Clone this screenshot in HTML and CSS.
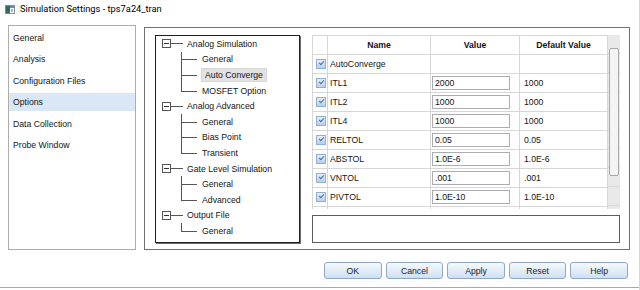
FILE: index.html
```html
<!DOCTYPE html>
<html lang="en">
<head>
    <meta charset="UTF-8">
    <title>Simulation Settings</title>
    <link rel="stylesheet" href="styles.css">
</head>
<body>
<div class="window">
    <div class="titlebar">
        <svg class="app-icon" width="10" height="9" viewBox="0 0 10 9">
            <rect x="0.5" y="0.5" width="9" height="8" fill="#fff" stroke="#8a8a8a"/>
            <rect x="1" y="1" width="4" height="7" fill="#2f6b5e"/>
            <rect x="5" y="1" width="4" height="2" fill="#5a8fc7"/>
            <rect x="6" y="4" width="2" height="3" fill="#9ab8d6"/>
        </svg>
        <span class="title">Simulation Settings - tps7a24_tran</span>
    </div>

    <div class="main">
        <ul class="nav">
            <li>General</li>
            <li>Analysis</li>
            <li>Configuration Files</li>
            <li class="active">Options</li>
            <li>Data Collection</li>
            <li>Probe Window</li>
        </ul>

        <div class="group">
            <div class="tree">
                <div class="node">
                    <div class="node-head"><span class="expander"></span><span class="connector"></span><span class="label">Analog Simulation</span></div>
                    <ul class="children">
                        <li><span class="label">General</span></li>
                        <li><span class="label selected">Auto Converge</span></li>
                        <li><span class="label">MOSFET Option</span></li>
                    </ul>
                </div>
                <div class="node">
                    <div class="node-head"><span class="expander"></span><span class="connector"></span><span class="label">Analog Advanced</span></div>
                    <ul class="children">
                        <li><span class="label">General</span></li>
                        <li><span class="label">Bias Point</span></li>
                        <li><span class="label">Transient</span></li>
                    </ul>
                </div>
                <div class="node">
                    <div class="node-head"><span class="expander"></span><span class="connector"></span><span class="label">Gate Level Simulation</span></div>
                    <ul class="children">
                        <li><span class="label">General</span></li>
                        <li><span class="label">Advanced</span></li>
                    </ul>
                </div>
                <div class="node">
                    <div class="node-head"><span class="expander"></span><span class="connector"></span><span class="label">Output File</span></div>
                    <ul class="children">
                        <li><span class="label">General</span></li>
                    </ul>
                </div>
            </div>

            <div class="options-pane">
                <div class="table-wrap">
                    <table class="grid">
                        <colgroup>
                            <col class="c-check"><col class="c-name"><col class="c-value"><col class="c-default">
                        </colgroup>
                        <tr><th></th><th>Name</th><th>Value</th><th>Default Value</th></tr>
                        <tr><td><span class="check"></span></td><td>AutoConverge</td><td></td><td></td></tr>
                        <tr><td><span class="check"></span></td><td>ITL1</td><td><span class="field">2000</span></td><td>1000</td></tr>
                        <tr><td><span class="check"></span></td><td>ITL2</td><td><span class="field">1000</span></td><td>1000</td></tr>
                        <tr><td><span class="check"></span></td><td>ITL4</td><td><span class="field">1000</span></td><td>1000</td></tr>
                        <tr><td><span class="check"></span></td><td>RELTOL</td><td><span class="field">0.05</span></td><td>0.05</td></tr>
                        <tr><td><span class="check"></span></td><td>ABSTOL</td><td><span class="field">1.0E-6</span></td><td>1.0E-6</td></tr>
                        <tr><td><span class="check"></span></td><td>VNTOL</td><td><span class="field">.001</span></td><td>.001</td></tr>
                        <tr><td><span class="check"></span></td><td>PIVTOL</td><td><span class="field">1.0E-10</span></td><td>1.0E-10</td></tr>
                        <tr><td></td><td></td><td><span class="field"></span></td><td></td></tr>
                    </table>
                    <div class="scrollbar"><div class="thumb"></div></div>
                </div>
                <div class="desc"></div>
            </div>
        </div>
    </div>

    <div class="buttons">
        <button>OK</button>
        <button>Cancel</button>
        <button>Apply</button>
        <button>Reset</button>
        <button>Help</button>
    </div>
    <div class="edge"></div>
</div>
</body>
</html>
```

FILE: styles.css
```css
*{
    box-sizing: border-box;
    margin: 0;
    padding: 0;
}
body{
    width: 640px;
    height: 290px;
    background: #fff;
    font-family: "Liberation Sans", Arial, sans-serif;
    font-size: 8.7px;
    color: #141414;
    overflow: hidden;
}
.window{
    height: 290px;
    border-right: 1px solid #d6d6d6;
}
.titlebar{
    height: 25px;
    display: flex;
    align-items: flex-start;
    gap: 5px;
    padding: 4px 0 0 5px;
}
.app-icon{
    margin-top: 1px;
}
.title{
    font-family: Roboto, sans-serif;
    font-size: 9.3px;
    line-height: 10px;
    color: #000;
}

.main{
    display: flex;
    align-items: flex-start;
    gap: 8px;
    padding-left: 8px;
}
.nav{
    list-style: none;
    width: 128px;
    height: 225px;
    border: 1px solid #adadad;
    padding-top: 3px;
}
.nav li{
    height: 18px;
    line-height: 18px;
    padding-left: 4px;
    margin-bottom: 3.4px;
}
.nav li.active{
    background: #d9e7f6;
}

.group{
    display: flex;
    gap: 12px;
    width: 486px;
    height: 223px;
    margin-top: 2px;
    border: 1px solid #707070;
    padding: 7px 9px 0 10px;
}

/* tree */
.tree{
    width: 145px;
    height: 208px;
    border: 1px solid #1e1e1e;
    box-shadow: 1px 1px 0 #6e6e6e;
}
.node-head{
    display: flex;
    align-items: center;
    height: 15.6px;
    padding-left: 6px;
}
.expander{
    position: relative;
    width: 9px;
    height: 9px;
    border: 1px solid #555;
}
.expander::after{
    content: '';
    position: absolute;
    left: 1px;
    right: 1px;
    top: 3px;
    height: 1px;
    background: #333;
}
.connector{
    width: 12px;
    height: 1px;
    background: #555;
    margin-right: 4px;
}
.children{
    list-style: none;
    margin-left: 25px;
}
.children li{
    position: relative;
    display: flex;
    align-items: center;
    height: 15.6px;
    padding-left: 21px;
}
.children li::before{
    content: '';
    position: absolute;
    left: 0;
    top: 0;
    width: 15px;
    height: 50%;
    border-left: 1px solid #555;
    border-bottom: 1px solid #555;
}
.children li:not(:last-child)::after{
    content: '';
    position: absolute;
    left: 0;
    top: 50%;
    bottom: 0;
    border-left: 1px solid #555;
}
.label.selected{
    background: #e2e2e2;
    border: 1px solid #d8d8d8;
    padding: 1px 3px;
    margin-left: -1px;
}

/* options table */
.options-pane{
    width: 308px;
}
.table-wrap{
    display: flex;
    height: 174px;
    overflow: hidden;
}
.grid{
    border-collapse: collapse;
    table-layout: fixed;
    width: 295px;
}
.c-check{ width: 15px; }
.c-name{ width: 103px; }
.c-value{ width: 89px; }
.c-default{ width: 88px; }
.grid th,
.grid td{
    height: 19px;
    border: 1px solid #d6d6d6;
    padding: 0 0 0 2px;
    white-space: nowrap;
    overflow: hidden;
}
.grid th{
    font-weight: bold;
    text-align: center;
    padding: 0;
}
.grid td:nth-child(3){
    padding-left: 1px;
}
.grid td:nth-child(4){
    padding-left: 4px;
}
.check{
    position: relative;
    display: block;
    width: 10px;
    height: 10px;
    margin-left: 1px;
    border: 1px solid #8fb0d6;
    background: linear-gradient(#e6eefa, #b8cfe9);
}
.check::after{
    content: '';
    position: absolute;
    left: 2px;
    top: 1px;
    width: 4px;
    height: 2px;
    border-left: 1.5px solid #3d6fae;
    border-bottom: 1.5px solid #3d6fae;
    transform: rotate(-45deg);
}
.field{
    display: block;
    width: 78px;
    height: 14px;
    line-height: 12px;
    border: 1px solid #abadb3;
    padding-left: 2px;
}
.scrollbar{
    width: 13px;
    height: 174px;
    padding-top: 13px;
    background: repeating-linear-gradient(to bottom, #e9e9e9 0 18px, #d9d9d9 18px 19px);
}
.thumb{
    width: 10px;
    height: 128px;
    margin-left: 1px;
    background: #f4f4f4;
    border: 1px solid #a9a9a9;
    border-radius: 2px;
}
.desc{
    height: 28px;
    margin-top: 6px;
    border: 1px solid #5c5c5c;
}

/* buttons */
.buttons{
    display: flex;
    justify-content: flex-end;
    gap: 4px;
    padding-right: 11px;
    margin-top: 12px;
}
button{
    width: 57.6px;
    height: 17px;
    border: 1px solid #8fa8c8;
    border-radius: 3px;
    background: linear-gradient(#f5f9fd, #cfe0f3);
    font-family: "Liberation Sans", Arial, sans-serif;
    font-size: 8.7px;
    color: #1c1c1c;
}
.edge{
    margin-top: 8px;
    height: 3px;
    border-top: 1px solid #a9a9a9;
}
```
